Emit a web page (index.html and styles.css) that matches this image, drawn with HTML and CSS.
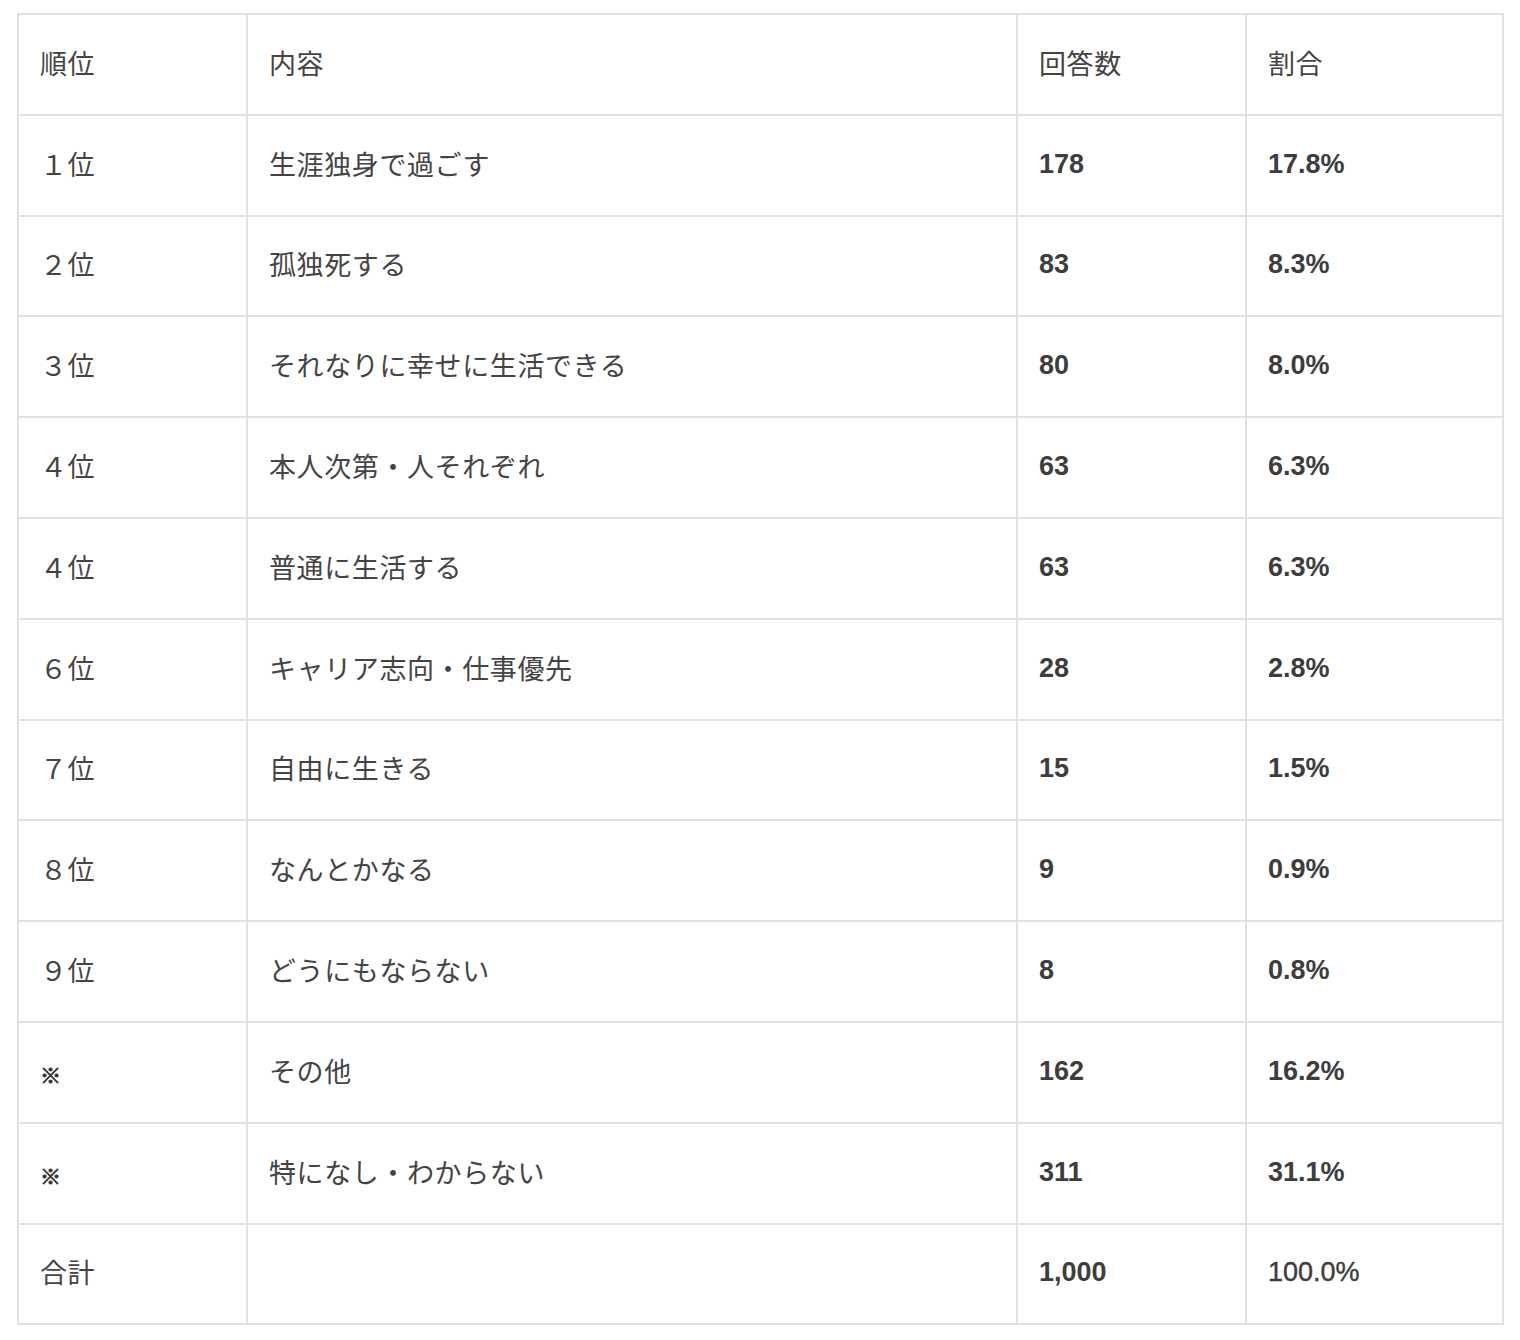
FILE: index.html
```html
<!DOCTYPE html>
<html lang="ja">
<head>
<meta charset="utf-8">
<link rel="stylesheet" href="styles.css">
</head>
<body>
<table class="ranking">
  <colgroup>
    <col class="c-rank"><col class="c-content"><col class="c-count"><col class="c-ratio">
  </colgroup>
  <tr><td>順位</td><td>内容</td><td>回答数</td><td>割合</td></tr>
  <tr><td>１位</td><td>生涯独身で過ごす</td><td class="num">178</td><td class="num">17.8%</td></tr>
  <tr><td>２位</td><td>孤独死する</td><td class="num">83</td><td class="num">8.3%</td></tr>
  <tr><td>３位</td><td>それなりに幸せに生活できる</td><td class="num">80</td><td class="num">8.0%</td></tr>
  <tr><td>４位</td><td>本人次第・人それぞれ</td><td class="num">63</td><td class="num">6.3%</td></tr>
  <tr><td>４位</td><td>普通に生活する</td><td class="num">63</td><td class="num">6.3%</td></tr>
  <tr><td>６位</td><td>キャリア志向・仕事優先</td><td class="num">28</td><td class="num">2.8%</td></tr>
  <tr><td>７位</td><td>自由に生きる</td><td class="num">15</td><td class="num">1.5%</td></tr>
  <tr><td>８位</td><td>なんとかなる</td><td class="num">9</td><td class="num">0.9%</td></tr>
  <tr><td>９位</td><td>どうにもならない</td><td class="num">8</td><td class="num">0.8%</td></tr>
  <tr><td class="mark">※</td><td>その他</td><td class="num">162</td><td class="num">16.2%</td></tr>
  <tr><td class="mark">※</td><td>特になし・わからない</td><td class="num">311</td><td class="num">31.1%</td></tr>
  <tr><td>合計</td><td></td><td class="num">1,000</td><td class="num light">100.0%</td></tr>
</table>
</body>
</html>
```

FILE: styles.css
```css
html, body {
  margin: 0;
  background: #ffffff;
}
body {
  padding: 13px 17px;
  font-family: "Noto Sans CJK JP", "Liberation Sans", sans-serif;
  color: #444444;
}
.ranking {
  border-collapse: collapse;
  table-layout: fixed;
  width: 1485px;
}
.c-rank { width: 229px; }
.c-content { width: 770px; }
.c-count { width: 229px; }
.c-ratio { width: 257px; }
.ranking tr {
  height: 100.8px;
}
.ranking td {
  border: 2px solid #e2e2e2;
  padding: 0 0 4px 21px;
  font-size: 27px;
  letter-spacing: 0.6px;
  line-height: 1.3;
  vertical-align: middle;
  text-align: left;
  font-weight: 400;
}
.ranking td.num {
  font-family: "Liberation Sans", Arial, sans-serif;
  font-weight: 700;
  font-size: 27px;
  letter-spacing: 0;
  color: #3d3d3d;
  padding-bottom: 2px;
}
.ranking td.num.light {
  font-weight: 400;
  -webkit-text-stroke: 0.4px #3d3d3d;
}
.ranking td.mark {
  font-size: 21px;
  font-weight: 700;
  padding-top: 4px;
  padding-bottom: 0;
  color: #333333;
  -webkit-text-stroke: 0.8px #333333;
}
```
